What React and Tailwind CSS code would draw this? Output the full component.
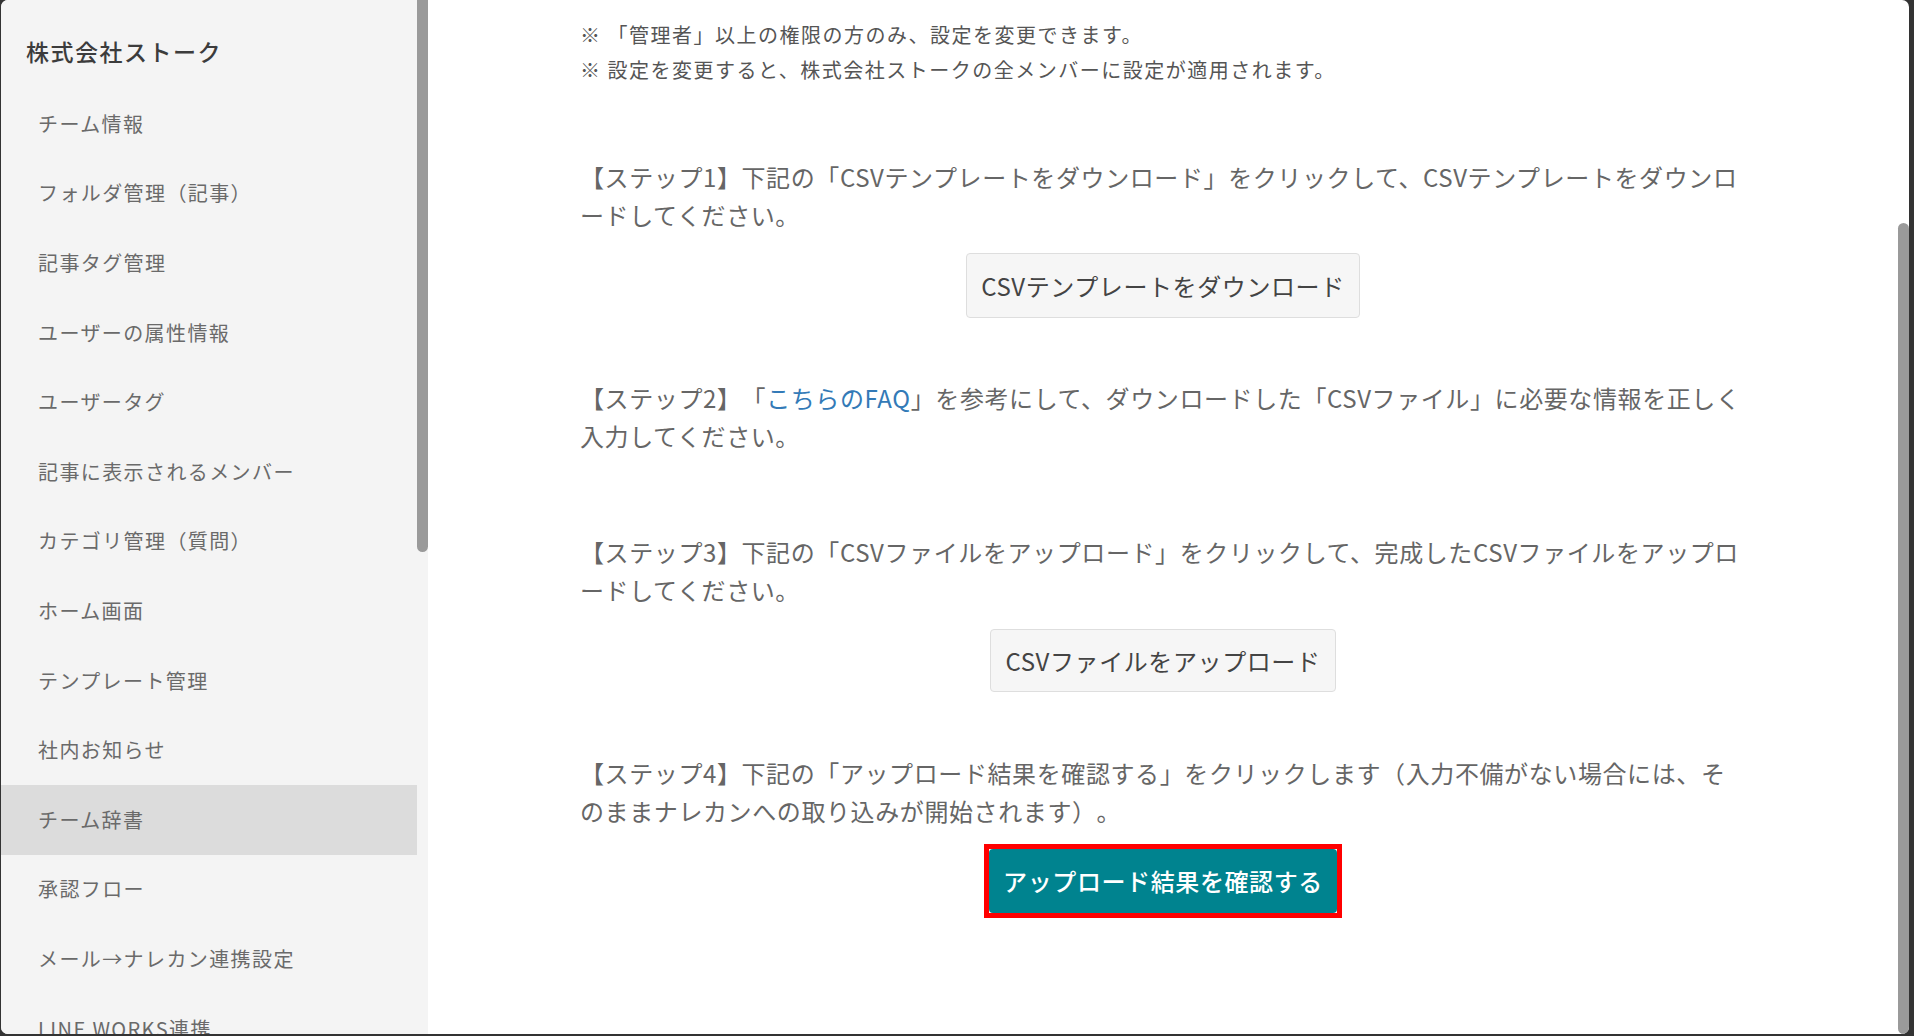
const menuItems = [
  "チーム情報",
  "フォルダ管理（記事）",
  "記事タグ管理",
  "ユーザーの属性情報",
  "ユーザータグ",
  "記事に表示されるメンバー",
  "カテゴリ管理（質問）",
  "ホーム画面",
  "テンプレート管理",
  "社内お知らせ",
  "チーム辞書",
  "承認フロー",
  "メール→ナレカン連携設定",
  "LINE WORKS連携",
];

const Sidebar = ({ active }) => (
  <aside className="w-[427px] h-full flex bg-[#f4f4f4] shrink-0">
    <div className="w-[416px] h-full overflow-hidden">
      <h2 className="pt-[33px] pl-[25px] h-[89px] text-[23px] leading-[36px] tracking-[1.5px] font-medium text-[#3c3c3c]">
        株式会社ストーク
      </h2>
      <ul>
        {menuItems.map((item) => (
          <li
            key={item}
            className={`h-[69.6px] flex items-center pl-[37px] text-[20px] tracking-[1.4px] text-[#6a6a6a] ${
              item === active ? "bg-[#dcdcdc]" : ""
            }`}
          >
            {item}
          </li>
        ))}
      </ul>
    </div>
    <div className="w-[11px] h-full">
      <div className="h-[552px] bg-[#9a9a9a] rounded-b-full" />
    </div>
  </aside>
);

const Step = ({ children, className = "" }) => (
  <p className={`text-[24px] leading-[38px] tracking-[0.6px] text-[#666] ${className}`}>{children}</p>
);

const GrayButton = ({ children, className = "" }) => (
  <div className={`flex justify-center ${className}`}>
    <button className="px-[14px] border border-[#dedede] bg-[#f6f6f6] rounded-[4px] text-[24px] tracking-[0.6px] text-[#444]">
      {children}
    </button>
  </div>
);

export default function App() {
  return (
    <div className="w-[1914px] h-[1036px] bg-[#333] pl-[1px] pr-[5px] pb-[2px] overflow-hidden font-['Noto_Sans_CJK_JP','Noto_Sans',sans-serif] [text-spacing-trim:space-all]">
      <div className="h-full flex rounded-[7px] overflow-hidden bg-white">
        <Sidebar active="チーム辞書" />
        <main className="flex-1 flex h-full">
          <div className="flex-1 overflow-hidden">
            <div className="w-[1166px] mx-auto pt-[17px]">
              <div className="text-[20px] leading-[35px] tracking-[1.5px] text-[#555]">
                <p>※ 「管理者」以上の権限の方のみ、設定を変更できます。</p>
                <p>※ 設定を変更すると、株式会社ストークの全メンバーに設定が適用されます。</p>
              </div>

              <Step className="mt-[71px]">
                【ステップ1】下記の「CSVテンプレートをダウンロード」をクリックして、CSVテンプレートをダウンロードしてください。
              </Step>
              <GrayButton className="mt-[19px]">
                <span className="block h-[63px] leading-[63px]">CSVテンプレートをダウンロード</span>
              </GrayButton>

              <Step className="mt-[61px]">
                【ステップ2】「<span className="text-[#337ab7]">こちらのFAQ</span>」を参考にして、ダウンロードした「CSVファイル」に必要な情報を正しく入力してください。
              </Step>

              <Step className="mt-[78px]">
                【ステップ3】下記の「CSVファイルをアップロード」をクリックして、完成したCSVファイルをアップロードしてください。
              </Step>
              <GrayButton className="mt-[20px]">
                <span className="block h-[61px] leading-[61px]">CSVファイルをアップロード</span>
              </GrayButton>

              <Step className="mt-[62px]">
                【ステップ4】下記の「アップロード結果を確認する」をクリックします（入力不備がない場合には、そのままナレカンへの取り込みが開始されます）。
              </Step>
              <div className="mt-[14px] flex justify-center">
                <div className="border-[5px] border-[#ff0000]">
                  <button className="h-[64px] px-[14px] rounded-[4px] bg-[#00838f] text-white text-[24px] font-medium tracking-[0.6px]">
                    アップロード結果を確認する
                  </button>
                </div>
              </div>
            </div>
          </div>
          <div className="w-[11px] h-full pt-[223px]">
            <div className="h-full bg-[#9a9a9a] rounded-full" />
          </div>
        </main>
      </div>
    </div>
  );
}
